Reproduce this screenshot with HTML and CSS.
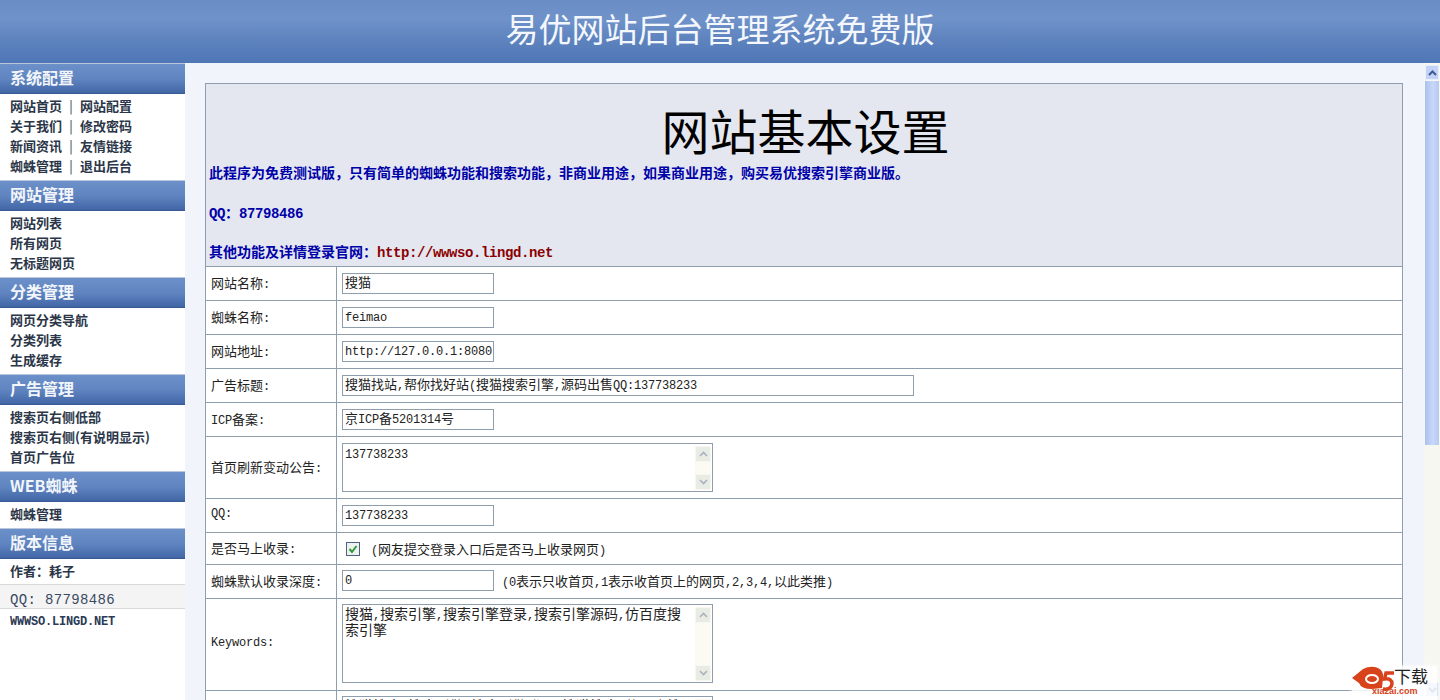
FILE: index.html
```html
<!DOCTYPE html>
<html lang="zh-CN">
<head>
    <meta charset="UTF-8">
    <title>易优网站后台管理系统免费版</title>
    <link rel="stylesheet" href="styles.css">
</head>
<body>
    <div class="header">易优网站后台管理系统免费版</div>

    <div class="layout">
        <div class="sidebar">
            <div class="menu-title">系统配置</div>
            <div class="menu-list">
                <div class="menu-item">网站首页<span class="sep">|</span>网站配置</div>
                <div class="menu-item">关于我们<span class="sep">|</span>修改密码</div>
                <div class="menu-item">新闻资讯<span class="sep">|</span>友情链接</div>
                <div class="menu-item">蜘蛛管理<span class="sep">|</span>退出后台</div>
            </div>

            <div class="menu-title">网站管理</div>
            <div class="menu-list">
                <div class="menu-item">网站列表</div>
                <div class="menu-item">所有网页</div>
                <div class="menu-item">无标题网页</div>
            </div>

            <div class="menu-title">分类管理</div>
            <div class="menu-list">
                <div class="menu-item">网页分类导航</div>
                <div class="menu-item">分类列表</div>
                <div class="menu-item">生成缓存</div>
            </div>

            <div class="menu-title">广告管理</div>
            <div class="menu-list">
                <div class="menu-item">搜索页右侧低部</div>
                <div class="menu-item">搜索页右侧(有说明显示)</div>
                <div class="menu-item">首页广告位</div>
            </div>

            <div class="menu-title">WEB蜘蛛</div>
            <div class="menu-list">
                <div class="menu-item">蜘蛛管理</div>
            </div>

            <div class="menu-title">版本信息</div>
            <div class="author">作者：耗子</div>
            <div class="qq-box">QQ: 87798486</div>
            <div class="site-link">WWWSO.LINGD.NET</div>
        </div>

        <div class="main">
            <div class="panel">
                <div class="panel-head">
                    <h1>网站基本设置</h1>
                    <p class="note">此程序为免费测试版，只有简单的蜘蛛功能和搜索功能，非商业用途，如果商业用途，购买易优搜索引擎商业版。</p>
                    <p class="note"><span class="note-en">QQ</span>：<span class="note-en">87798486</span></p>
                    <p class="note">其他功能及详情登录官网：<span class="note-en url">http://wwwso.lingd.net</span></p>
                </div>

                <div class="row h34">
                    <div class="label"><span>网站名称<span class="en">:</span></span></div>
                    <div class="field"><div class="input">搜猫</div></div>
                </div>
                <div class="row h34">
                    <div class="label"><span>蜘蛛名称<span class="en">:</span></span></div>
                    <div class="field"><div class="input"><span class="en">feimao</span></div></div>
                </div>
                <div class="row h34">
                    <div class="label"><span>网站地址<span class="en">:</span></span></div>
                    <div class="field"><div class="input"><span class="en">http://127.0.0.1:8080</span></div></div>
                </div>
                <div class="row h34">
                    <div class="label"><span>广告标题<span class="en">:</span></span></div>
                    <div class="field"><div class="input input-wide">搜猫找站<span class="en">,</span>帮你找好站<span class="en">(</span>搜猫搜索引擎<span class="en">,</span>源码出售<span class="en">QQ:137738233</span></div></div>
                </div>
                <div class="row h34">
                    <div class="label"><span><span class="en">ICP</span>备案<span class="en">:</span></span></div>
                    <div class="field"><div class="input">京<span class="en">ICP</span>备<span class="en">5201314</span>号</div></div>
                </div>
                <div class="row h62">
                    <div class="label"><span>首页刷新变动公告<span class="en">:</span></span></div>
                    <div class="field">
                        <div class="textarea ta-small">
                            <div class="ta-text"><span class="en">137738233</span></div>
                            <div class="ta-bar">
                                <span class="ta-btn"><svg width="9" height="6" viewBox="0 0 9 6"><path d="M1 5l3.5-3.5L8 5" fill="none" stroke="#a9b3bd" stroke-width="1.6"/></svg></span>
                                <span class="ta-btn"><svg width="9" height="6" viewBox="0 0 9 6"><path d="M1 1l3.5 3.5L8 1" fill="none" stroke="#a9b3bd" stroke-width="1.6"/></svg></span>
                            </div>
                        </div>
                    </div>
                </div>
                <div class="row h34">
                    <div class="label"><span class="en">QQ:</span></div>
                    <div class="field"><div class="input"><span class="en">137738233</span></div></div>
                </div>
                <div class="row h31">
                    <div class="label"><span>是否马上收录<span class="en">:</span></span></div>
                    <div class="field">
                        <span class="check"><svg width="12" height="12" viewBox="0 0 12 12"><path d="M2.5 6l2.5 3L9.5 3" fill="none" stroke="#2f9a3c" stroke-width="2"/></svg></span>
                        <span class="hint"><span class="en">(</span>网友提交登录入口后是否马上收录网页<span class="en">)</span></span>
                    </div>
                </div>
                <div class="row h34">
                    <div class="label"><span>蜘蛛默认收录深度<span class="en">:</span></span></div>
                    <div class="field field-depth">
                        <div class="input"><span class="en">0</span></div>
                        <span class="hint hint-depth"><span class="en">(0</span>表示只收首页<span class="en">,1</span>表示收首页上的网页<span class="en">,2,3,4,</span>以此类推<span class="en">)</span></span>
                    </div>
                </div>
                <div class="row h92">
                    <div class="label"><span class="en">Keywords:</span></div>
                    <div class="field field-top">
                        <div class="textarea ta-big">
                            <div class="ta-text">搜猫<span class="en">,</span>搜索引擎<span class="en">,</span>搜索引擎登录<span class="en">,</span>搜索引擎源码<span class="en">,</span>仿百度搜索引擎</div>
                            <div class="ta-bar">
                                <span class="ta-btn"><svg width="9" height="6" viewBox="0 0 9 6"><path d="M1 5l3.5-3.5L8 5" fill="none" stroke="#a9b3bd" stroke-width="1.6"/></svg></span>
                                <span class="ta-btn"><svg width="9" height="6" viewBox="0 0 9 6"><path d="M1 1l3.5 3.5L8 1" fill="none" stroke="#a9b3bd" stroke-width="1.6"/></svg></span>
                            </div>
                        </div>
                    </div>
                </div>
                <div class="row h92">
                    <div class="label"><span class="en">Description:</span></div>
                    <div class="field field-top">
                        <div class="textarea ta-big">
                            <div class="ta-text">搜猫搜索<span class="en">,</span>搜索引擎<span class="en">,</span>搜索引擎登录<span class="en">,</span>搜猫搜索<span class="en">,</span>仿百度搜索</div>
                            <div class="ta-bar">
                                <span class="ta-btn"><svg width="9" height="6" viewBox="0 0 9 6"><path d="M1 5l3.5-3.5L8 5" fill="none" stroke="#a9b3bd" stroke-width="1.6"/></svg></span>
                            </div>
                        </div>
                    </div>
                </div>
            </div>
        </div>

        <div class="scrollbar">
            <div class="sb-btn"><svg width="9" height="6" viewBox="0 0 9 6"><path d="M1 5l3.5-3.5L8 5" fill="none" stroke="#3d5a94" stroke-width="2"/></svg></div>
            <div class="sb-thumb"></div>
            <div class="sb-btn sb-down"><svg width="9" height="6" viewBox="0 0 9 6"><path d="M1 1l3.5 3.5L8 1" fill="none" stroke="#3d5a94" stroke-width="2"/></svg></div>
        </div>
    </div>

    <div class="watermark">
        <svg width="44" height="28" viewBox="0 0 44 28">
            <path d="M0 13L11 4Q19 0 26 3Q32 6 31 13L30 23L20 24Q9 24 7 18Z" fill="#d8431c"/>
            <ellipse cx="20" cy="14" rx="6" ry="4" fill="#d8431c" stroke="#fff" stroke-width="2"/>
            <path d="M42 8H34L32.5 14Q40 13 40 19Q39 25 31 24" fill="none" stroke="#d8431c" stroke-width="3.5"/>
        </svg>
        <span class="wm-title">下载</span>
        <span class="wm-sub">xiazai.com</span>
    </div>
</body>
</html>
```

FILE: styles.css
```css
html, body {
    margin: 0;
    padding: 0;
    height: 700px;
    overflow: hidden;
}

body {
    background: #fff;
    font-family: "Noto Sans CJK SC", sans-serif;
    font-size: 13px;
    color: #222;
}

/* latin text in the form, 7px per character */
.en {
    font-family: "Liberation Mono", monospace;
    font-size: 12px;
    line-height: 1;
    letter-spacing: -0.2px;
}

.header {
    height: 63px;
    line-height: 56px;
    text-align: center;
    color: #f4f7fc;
    font-size: 33px;
    background: linear-gradient(#6b8dc6 0%, #6f92c9 30%, #5f84bf 60%, #4f76b6 100%);
}

.layout {
    display: flex;
    height: 637px;
    overflow: hidden;
}

.sidebar {
    width: 185px;
    flex: none;
    background: #fff;
}

.menu-title {
    height: 30px;
    line-height: 27px;
    padding-left: 10px;
    border-top: 1px solid #b9c6dc;
    color: #f2f5fa;
    font-size: 16px;
    font-weight: 700;
    background: linear-gradient(#6c90c9 0%, #5f84c0 50%, #4468a8 94%, #34548c 100%);
}

.menu-list {
    padding: 2px 0 4px 10px;
}

.menu-item {
    height: 20px;
    line-height: 20px;
    font-weight: 700;
    color: #2b3648;
    white-space: nowrap;
}

.sep {
    display: inline-block;
    width: 18px;
    text-align: center;
    font-weight: 400;
}

.author {
    height: 25px;
    line-height: 24px;
    padding-left: 10px;
    font-weight: 700;
    color: #2b3648;
    border-bottom: 1px solid #d9d9d9;
}

.qq-box {
    height: 23px;
    line-height: 30px;
    padding-left: 10px;
    font-family: "Liberation Mono", monospace;
    font-size: 14px;
    letter-spacing: 0.35px;
    color: #3a4a63;
    background: #f4f4f4;
    border-bottom: 1px solid #d9d9d9;
}

.site-link {
    padding: 6px 0 0 10px;
    line-height: 14px;
    font-family: "Liberation Mono", monospace;
    font-size: 12px;
    font-weight: 700;
    letter-spacing: -0.2px;
    color: #2b3a55;
}

.main {
    flex: 1;
    min-width: 0;
    padding: 20px 21px 0 20px;
    background: #f1f4fb;
}

.panel {
    border: 1px solid #8f9ead;
    border-bottom: 0;
    background: #fff;
}

.panel-head {
    height: 182px;
    background: #e4e7f0;
    padding-left: 3px;
    box-sizing: border-box;
    overflow: hidden;
}

.panel-head h1 {
    margin: 20px 0 8px;
    height: 50px;
    line-height: 50px;
    text-align: center;
    font-size: 48px;
    font-weight: 400;
    color: #000;
}

.note {
    margin: 0 0 19.5px;
    height: 20px;
    line-height: 20px;
    font-size: 14px;
    font-weight: 700;
    color: #0000a8;
    white-space: nowrap;
}

.note-en {
    font-family: "Liberation Mono", monospace;
    letter-spacing: -0.4px;
}

.url {
    color: #8b0000;
}

.row {
    display: flex;
    border-top: 1px solid #8f9ead;
}

.h31 { height: 31px; }
.h34 { height: 33px; }
.h62 { height: 61px; }
.h92 { height: 91px; }

.label {
    width: 125px;
    height: calc(100% - 3px);
    padding-bottom: 3px;
    flex: none;
    padding-left: 5px;
    display: flex;
    align-items: center;
    border-right: 1px solid #8f9ead;
    white-space: nowrap;
    color: #222;
}

.field {
    flex: 1;
    display: flex;
    align-items: center;
    padding-left: 5px;
}

.field-top {
    align-items: flex-start;
    padding-top: 5px;
}

.field-depth {
    padding-bottom: 2px;
}

.input {
    width: 148px;
    height: 19px;
    line-height: 16px;
    padding-left: 2px;
    border: 1px solid #8f9ead;
    background: #fff;
    white-space: nowrap;
    overflow: hidden;
    flex: none;
}

.input-wide {
    width: 568px;
}

.textarea {
    display: flex;
    width: 366px;
    border: 1px solid #8f9ead;
    background: #fff;
    padding: 2px 1px 1px 2px;
}

.ta-small { height: 44px; }
.ta-big { height: 74px; }

.ta-text {
    flex: 1;
    margin-top: -1px;
    font-size: 14px;
    line-height: 15px;
    padding-right: 6px;
}

.ta-bar {
    width: 16px;
    flex: none;
    display: flex;
    flex-direction: column;
    justify-content: space-between;
    background: #fbfbf3;
}

.ta-btn {
    height: 16px;
    display: flex;
    align-items: center;
    justify-content: center;
    background: #e9ece4;
    border: 1px solid #f7f7f0;
    box-sizing: border-box;
}

.check {
    width: 12px;
    height: 12px;
    margin: 0 9px 0 4px;
    border: 1px solid #4d6185;
    background: #eef2ee;
    display: inline-block;
}

.check svg { display: block; }

.hint {
    white-space: nowrap;
    padding-left: 2px;
}

.hint-depth {
    padding-left: 8px;
}

.scrollbar {
    width: 16px;
    flex: none;
    display: flex;
    flex-direction: column;
    padding-bottom: 3px;
    box-sizing: border-box;
    background: #f7f7f2;
}

.sb-btn {
    height: 15px;
    margin: 2px 1px 0;
    flex: none;
    display: flex;
    align-items: center;
    justify-content: center;
    background: #c3d3f7;
    border: 1px solid #e8eefb;
    box-sizing: border-box;
}

.sb-thumb {
    height: 364px;
    margin: 1px 1px 0;
    background: linear-gradient(90deg, #a9bfee, #c9d8fa 55%, #b6c9f1);
}

.sb-down {
    margin-top: auto;
}

.watermark {
    position: absolute;
    left: 1352px;
    top: 666px;
    width: 85px;
    height: 34px;
    background: rgba(255, 255, 255, 0.85);
    box-shadow: 0 0 4px #fff;
}

.watermark svg {
    position: absolute;
    left: 0;
    top: -1px;
}

.wm-title {
    position: absolute;
    left: 42px;
    top: 0;
    font-size: 17px;
    line-height: 20px;
    color: #222;
}

.wm-sub {
    position: absolute;
    left: 20px;
    top: 19px;
    line-height: 12px;
    font-family: "Liberation Sans", sans-serif;
    font-size: 9px;
    font-weight: 700;
    color: #d8431c;
}
```
